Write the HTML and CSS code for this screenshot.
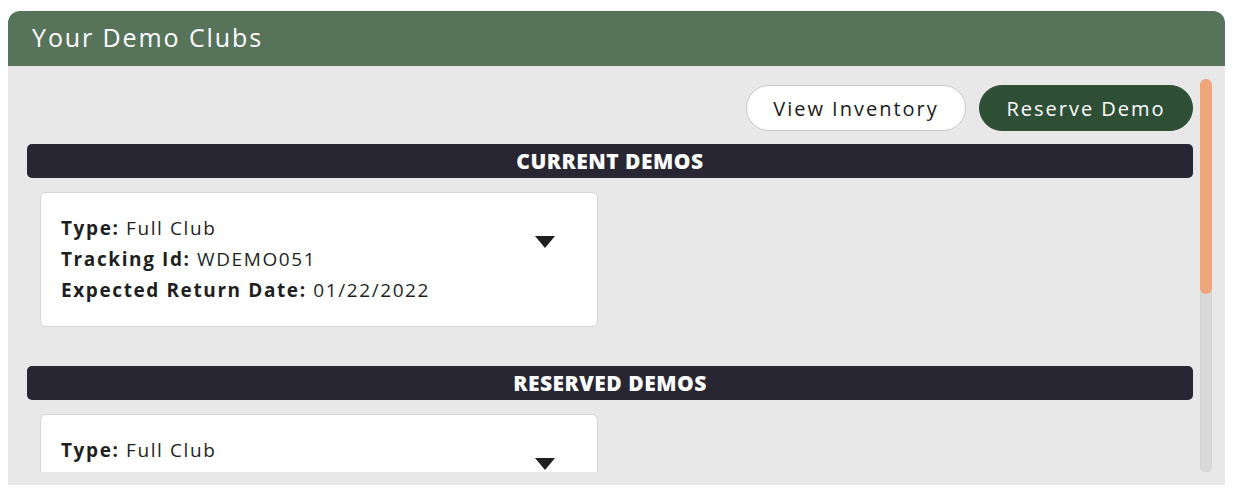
FILE: index.html
```html
<!DOCTYPE html>
<html lang="en">
<head>
<meta charset="utf-8">
<title>Your Demo Clubs</title>
<link rel="stylesheet" href="styles.css">
</head>
<body>
<section class="panel">
  <header class="panel-header">
    <h1 class="panel-title">Your Demo Clubs</h1>
  </header>
  <div class="panel-body">
    <div class="scroller">
      <div class="actions">
        <button class="btn btn-outline">View Inventory</button>
        <button class="btn btn-solid">Reserve Demo</button>
      </div>

      <h2 class="section-bar">CURRENT DEMOS</h2>
      <div class="card-list">
        <div class="card">
          <div class="card-info">
            <p class="line"><b>Type:</b> Full Club</p>
            <p class="line"><b>Tracking Id:</b> WDEMO051</p>
            <p class="line"><b>Expected Return Date:</b> 01/22/2022</p>
          </div>
          <span class="caret"></span>
        </div>
      </div>

      <h2 class="section-bar section-gap">RESERVED DEMOS</h2>
      <div class="card-list">
        <div class="card">
          <div class="card-info">
            <p class="line"><b>Type:</b> Full Club</p>
          </div>
          <span class="caret"></span>
        </div>
      </div>
    </div>
    <div class="scrollbar">
      <div class="scrollbar-thumb"></div>
    </div>
  </div>
</section>
</body>
</html>
```

FILE: styles.css
```css
* { box-sizing: border-box; }

html, body {
  margin: 0;
  padding: 0;
  background: #ffffff;
}

body {
  font-family: "Open Sans", "Noto Sans", sans-serif;
  color: #1f1f1f;
}

.panel {
  margin: 11px 9px 0 8px;
  height: 474px;
  display: flex;
  flex-direction: column;
}

.panel-header {
  background: #57735a;
  height: 55px;
  border-radius: 12px 12px 0 0;
  display: flex;
  align-items: center;
  padding: 0 24px;
}

.panel-title {
  margin: 0;
  color: #ffffff;
  font-weight: 400;
  font-size: 25px;
  letter-spacing: 1.9px;
  line-height: 1;
  padding-bottom: 2px;
}

.panel-body {
  flex: 1;
  min-height: 0;
  background: #e8e8e8;
  padding: 13px;
  display: flex;
}

.scroller {
  flex: 1;
  min-height: 0;
  overflow: hidden;
  padding: 6px 0 0 6px;
}

.scrollbar {
  width: 12px;
  margin-left: 7px;
  background: #d9d9d9;
  border-radius: 6px;
  box-shadow: inset 0 0 2px rgba(0, 0, 0, 0.1);
}

.scrollbar-thumb {
  height: 215px;
  background: #eea77c;
  border-radius: 6px;
}

.actions {
  display: flex;
  justify-content: flex-end;
  gap: 13px;
  margin-bottom: 13px;
}

.btn {
  height: 46px;
  border-radius: 23px;
  font-family: "Open Sans", "Noto Sans", sans-serif;
  font-size: 20px;
  letter-spacing: 2px;
  padding: 0;
  cursor: pointer;
}

.btn-outline {
  background: #ffffff;
  border: 1px solid #c9c9c9;
  color: #1a1a1a;
  width: 220px;
}

.btn-solid {
  background: #2e4e36;
  border: 1px solid #2e4e36;
  color: #ffffff;
  width: 214px;
}

.section-bar {
  margin: 0 0 14px;
  height: 34px;
  background: #272632;
  color: #ffffff;
  border-radius: 5px;
  font-size: 21px;
  font-weight: 800;
  letter-spacing: 0.5px;
  display: flex;
  align-items: center;
  justify-content: center;
}

.section-gap {
  margin-top: 39px;
}

.card-list {
  display: flex;
  flex-direction: column;
  gap: 20px;
  padding-left: 13px;
}

.card {
  width: 558px;
  height: 135px;
  background: #ffffff;
  border: 1px solid #d6d6d6;
  border-radius: 6px;
  padding: 20px 42px 0 20px;
  display: flex;
  justify-content: space-between;
  align-items: flex-start;
}

.line {
  margin: 0;
  font-size: 19px;
  line-height: 31px;
  letter-spacing: 1.6px;
  color: #1f1f1f;
}

.line b {
  font-weight: 700;
}

.caret {
  margin-top: 23px;
  width: 0;
  height: 0;
  border-left: 10px solid transparent;
  border-right: 10px solid transparent;
  border-top: 12px solid #1f1f1f;
}
```
